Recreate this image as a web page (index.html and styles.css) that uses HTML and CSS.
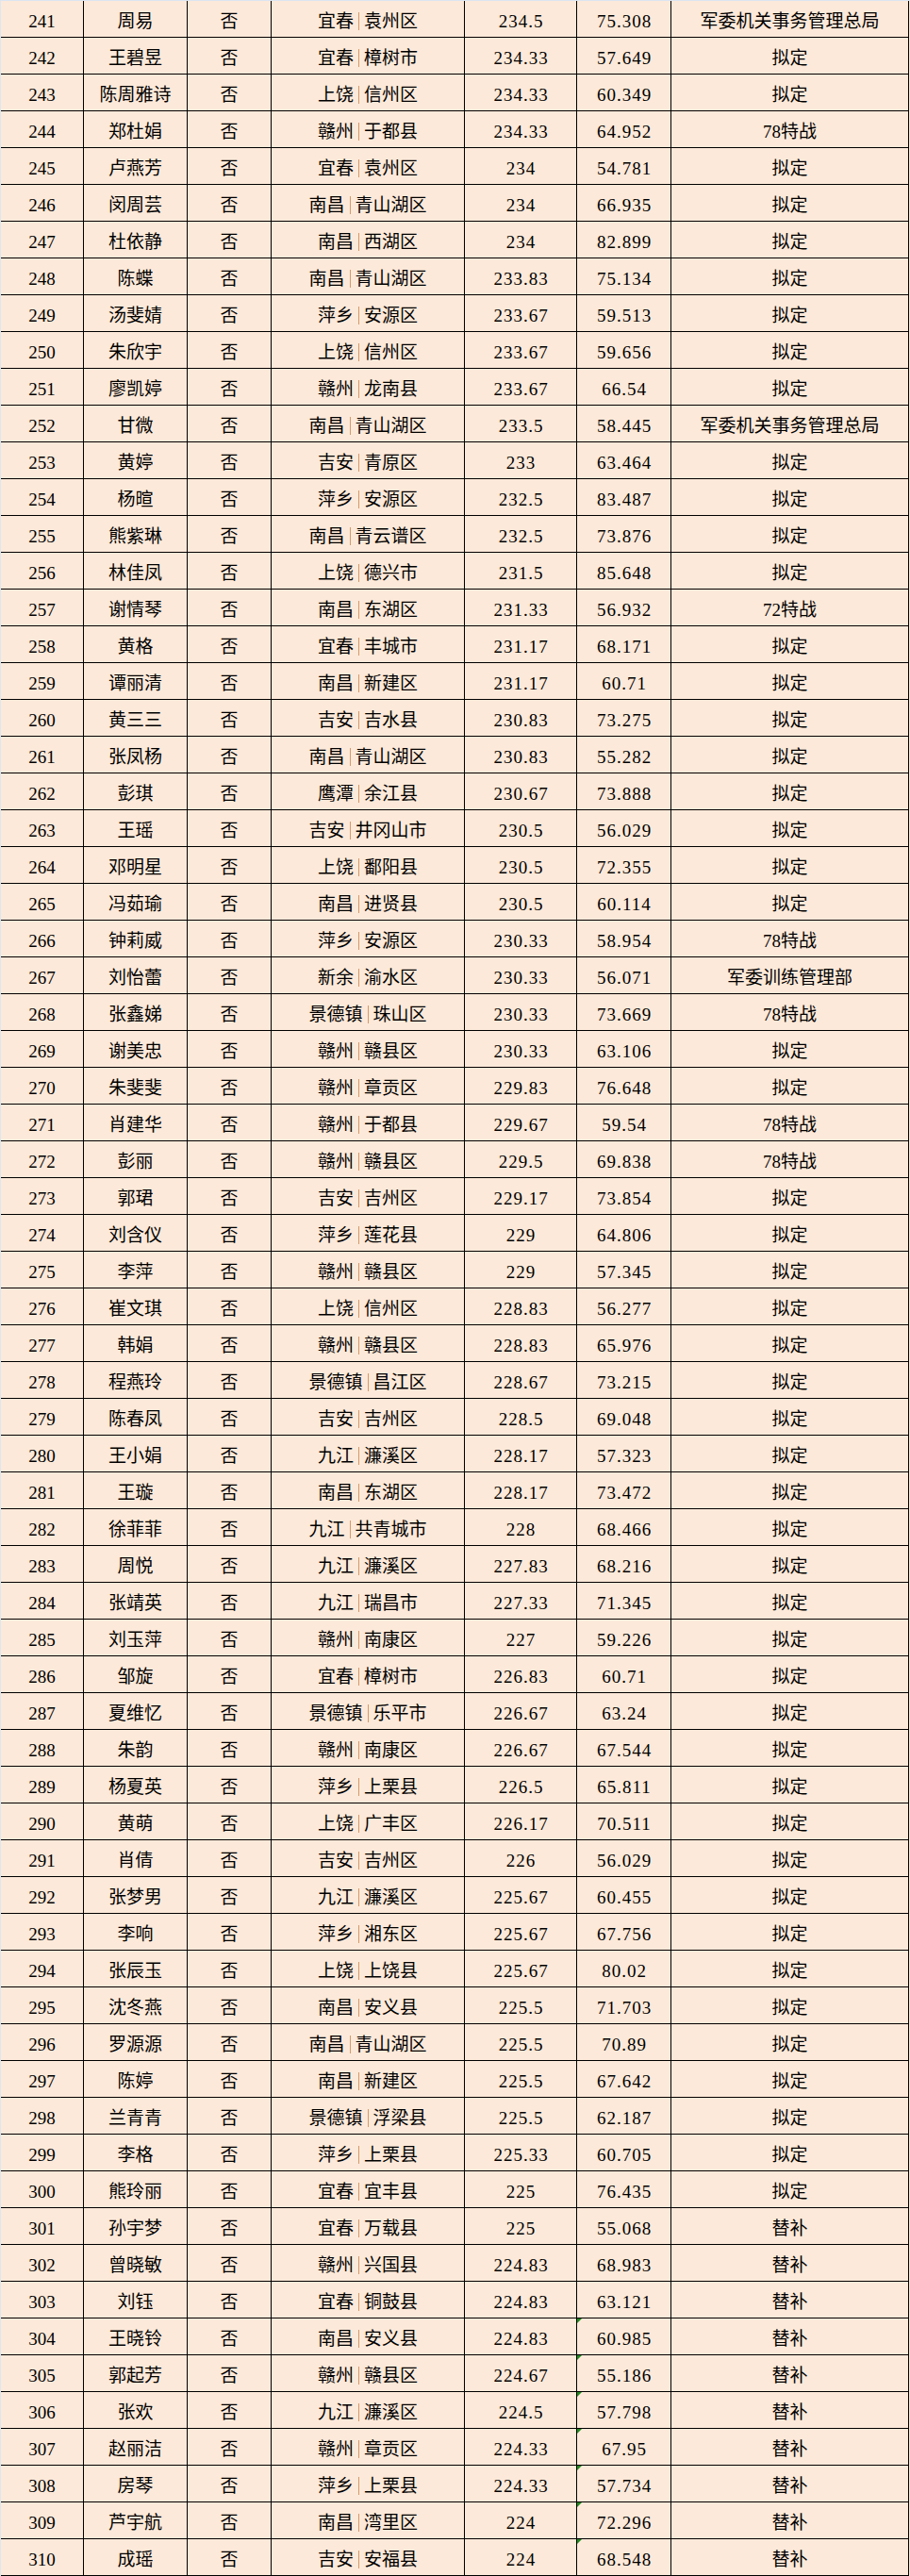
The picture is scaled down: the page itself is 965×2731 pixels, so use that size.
FILE: index.html
```html
<!DOCTYPE html>
<html lang="zh-CN">
<head>
<meta charset="utf-8">
<title>名单</title>
<link rel="stylesheet" href="styles.css">
</head>
<body>
<div class="sheet">
<div class="row"><div class="c">241</div><div class="c">周易</div><div class="c">否</div><div class="c">宜春<i class="sep"></i>袁州区</div><div class="c">234.5</div><div class="c">75.308</div><div class="c">军委机关事务管理总局</div></div>
<div class="row"><div class="c">242</div><div class="c">王碧昱</div><div class="c">否</div><div class="c">宜春<i class="sep"></i>樟树市</div><div class="c">234.33</div><div class="c">57.649</div><div class="c">拟定</div></div>
<div class="row"><div class="c">243</div><div class="c">陈周雅诗</div><div class="c">否</div><div class="c">上饶<i class="sep"></i>信州区</div><div class="c">234.33</div><div class="c">60.349</div><div class="c">拟定</div></div>
<div class="row"><div class="c">244</div><div class="c">郑杜娟</div><div class="c">否</div><div class="c">赣州<i class="sep"></i>于都县</div><div class="c">234.33</div><div class="c">64.952</div><div class="c">78特战</div></div>
<div class="row"><div class="c">245</div><div class="c">卢燕芳</div><div class="c">否</div><div class="c">宜春<i class="sep"></i>袁州区</div><div class="c">234</div><div class="c">54.781</div><div class="c">拟定</div></div>
<div class="row"><div class="c">246</div><div class="c">闵周芸</div><div class="c">否</div><div class="c">南昌<i class="sep"></i>青山湖区</div><div class="c">234</div><div class="c">66.935</div><div class="c">拟定</div></div>
<div class="row"><div class="c">247</div><div class="c">杜依静</div><div class="c">否</div><div class="c">南昌<i class="sep"></i>西湖区</div><div class="c">234</div><div class="c">82.899</div><div class="c">拟定</div></div>
<div class="row"><div class="c">248</div><div class="c">陈蝶</div><div class="c">否</div><div class="c">南昌<i class="sep"></i>青山湖区</div><div class="c">233.83</div><div class="c">75.134</div><div class="c">拟定</div></div>
<div class="row"><div class="c">249</div><div class="c">汤斐婧</div><div class="c">否</div><div class="c">萍乡<i class="sep"></i>安源区</div><div class="c">233.67</div><div class="c">59.513</div><div class="c">拟定</div></div>
<div class="row"><div class="c">250</div><div class="c">朱欣宇</div><div class="c">否</div><div class="c">上饶<i class="sep"></i>信州区</div><div class="c">233.67</div><div class="c">59.656</div><div class="c">拟定</div></div>
<div class="row"><div class="c">251</div><div class="c">廖凯婷</div><div class="c">否</div><div class="c">赣州<i class="sep"></i>龙南县</div><div class="c">233.67</div><div class="c">66.54</div><div class="c">拟定</div></div>
<div class="row"><div class="c">252</div><div class="c">甘微</div><div class="c">否</div><div class="c">南昌<i class="sep"></i>青山湖区</div><div class="c">233.5</div><div class="c">58.445</div><div class="c">军委机关事务管理总局</div></div>
<div class="row"><div class="c">253</div><div class="c">黄婷</div><div class="c">否</div><div class="c">吉安<i class="sep"></i>青原区</div><div class="c">233</div><div class="c">63.464</div><div class="c">拟定</div></div>
<div class="row"><div class="c">254</div><div class="c">杨暄</div><div class="c">否</div><div class="c">萍乡<i class="sep"></i>安源区</div><div class="c">232.5</div><div class="c">83.487</div><div class="c">拟定</div></div>
<div class="row"><div class="c">255</div><div class="c">熊紫琳</div><div class="c">否</div><div class="c">南昌<i class="sep"></i>青云谱区</div><div class="c">232.5</div><div class="c">73.876</div><div class="c">拟定</div></div>
<div class="row"><div class="c">256</div><div class="c">林佳凤</div><div class="c">否</div><div class="c">上饶<i class="sep"></i>德兴市</div><div class="c">231.5</div><div class="c">85.648</div><div class="c">拟定</div></div>
<div class="row"><div class="c">257</div><div class="c">谢情琴</div><div class="c">否</div><div class="c">南昌<i class="sep"></i>东湖区</div><div class="c">231.33</div><div class="c">56.932</div><div class="c">72特战</div></div>
<div class="row"><div class="c">258</div><div class="c">黄格</div><div class="c">否</div><div class="c">宜春<i class="sep"></i>丰城市</div><div class="c">231.17</div><div class="c">68.171</div><div class="c">拟定</div></div>
<div class="row"><div class="c">259</div><div class="c">谭丽清</div><div class="c">否</div><div class="c">南昌<i class="sep"></i>新建区</div><div class="c">231.17</div><div class="c">60.71</div><div class="c">拟定</div></div>
<div class="row"><div class="c">260</div><div class="c">黄三三</div><div class="c">否</div><div class="c">吉安<i class="sep"></i>吉水县</div><div class="c">230.83</div><div class="c">73.275</div><div class="c">拟定</div></div>
<div class="row"><div class="c">261</div><div class="c">张凤杨</div><div class="c">否</div><div class="c">南昌<i class="sep"></i>青山湖区</div><div class="c">230.83</div><div class="c">55.282</div><div class="c">拟定</div></div>
<div class="row"><div class="c">262</div><div class="c">彭琪</div><div class="c">否</div><div class="c">鹰潭<i class="sep"></i>余江县</div><div class="c">230.67</div><div class="c">73.888</div><div class="c">拟定</div></div>
<div class="row"><div class="c">263</div><div class="c">王瑶</div><div class="c">否</div><div class="c">吉安<i class="sep"></i>井冈山市</div><div class="c">230.5</div><div class="c">56.029</div><div class="c">拟定</div></div>
<div class="row"><div class="c">264</div><div class="c">邓明星</div><div class="c">否</div><div class="c">上饶<i class="sep"></i>鄱阳县</div><div class="c">230.5</div><div class="c">72.355</div><div class="c">拟定</div></div>
<div class="row"><div class="c">265</div><div class="c">冯茹瑜</div><div class="c">否</div><div class="c">南昌<i class="sep"></i>进贤县</div><div class="c">230.5</div><div class="c">60.114</div><div class="c">拟定</div></div>
<div class="row"><div class="c">266</div><div class="c">钟莉威</div><div class="c">否</div><div class="c">萍乡<i class="sep"></i>安源区</div><div class="c">230.33</div><div class="c">58.954</div><div class="c">78特战</div></div>
<div class="row"><div class="c">267</div><div class="c">刘怡蕾</div><div class="c">否</div><div class="c">新余<i class="sep"></i>渝水区</div><div class="c">230.33</div><div class="c">56.071</div><div class="c">军委训练管理部</div></div>
<div class="row"><div class="c">268</div><div class="c">张鑫娣</div><div class="c">否</div><div class="c">景德镇<i class="sep"></i>珠山区</div><div class="c">230.33</div><div class="c">73.669</div><div class="c">78特战</div></div>
<div class="row"><div class="c">269</div><div class="c">谢美忠</div><div class="c">否</div><div class="c">赣州<i class="sep"></i>赣县区</div><div class="c">230.33</div><div class="c">63.106</div><div class="c">拟定</div></div>
<div class="row"><div class="c">270</div><div class="c">朱斐斐</div><div class="c">否</div><div class="c">赣州<i class="sep"></i>章贡区</div><div class="c">229.83</div><div class="c">76.648</div><div class="c">拟定</div></div>
<div class="row"><div class="c">271</div><div class="c">肖建华</div><div class="c">否</div><div class="c">赣州<i class="sep"></i>于都县</div><div class="c">229.67</div><div class="c">59.54</div><div class="c">78特战</div></div>
<div class="row"><div class="c">272</div><div class="c">彭丽</div><div class="c">否</div><div class="c">赣州<i class="sep"></i>赣县区</div><div class="c">229.5</div><div class="c">69.838</div><div class="c">78特战</div></div>
<div class="row"><div class="c">273</div><div class="c">郭珺</div><div class="c">否</div><div class="c">吉安<i class="sep"></i>吉州区</div><div class="c">229.17</div><div class="c">73.854</div><div class="c">拟定</div></div>
<div class="row"><div class="c">274</div><div class="c">刘含仪</div><div class="c">否</div><div class="c">萍乡<i class="sep"></i>莲花县</div><div class="c">229</div><div class="c">64.806</div><div class="c">拟定</div></div>
<div class="row"><div class="c">275</div><div class="c">李萍</div><div class="c">否</div><div class="c">赣州<i class="sep"></i>赣县区</div><div class="c">229</div><div class="c">57.345</div><div class="c">拟定</div></div>
<div class="row"><div class="c">276</div><div class="c">崔文琪</div><div class="c">否</div><div class="c">上饶<i class="sep"></i>信州区</div><div class="c">228.83</div><div class="c">56.277</div><div class="c">拟定</div></div>
<div class="row"><div class="c">277</div><div class="c">韩娟</div><div class="c">否</div><div class="c">赣州<i class="sep"></i>赣县区</div><div class="c">228.83</div><div class="c">65.976</div><div class="c">拟定</div></div>
<div class="row"><div class="c">278</div><div class="c">程燕玲</div><div class="c">否</div><div class="c">景德镇<i class="sep"></i>昌江区</div><div class="c">228.67</div><div class="c">73.215</div><div class="c">拟定</div></div>
<div class="row"><div class="c">279</div><div class="c">陈春凤</div><div class="c">否</div><div class="c">吉安<i class="sep"></i>吉州区</div><div class="c">228.5</div><div class="c">69.048</div><div class="c">拟定</div></div>
<div class="row"><div class="c">280</div><div class="c">王小娟</div><div class="c">否</div><div class="c">九江<i class="sep"></i>濂溪区</div><div class="c">228.17</div><div class="c">57.323</div><div class="c">拟定</div></div>
<div class="row"><div class="c">281</div><div class="c">王璇</div><div class="c">否</div><div class="c">南昌<i class="sep"></i>东湖区</div><div class="c">228.17</div><div class="c">73.472</div><div class="c">拟定</div></div>
<div class="row"><div class="c">282</div><div class="c">徐菲菲</div><div class="c">否</div><div class="c">九江<i class="sep"></i>共青城市</div><div class="c">228</div><div class="c">68.466</div><div class="c">拟定</div></div>
<div class="row"><div class="c">283</div><div class="c">周悦</div><div class="c">否</div><div class="c">九江<i class="sep"></i>濂溪区</div><div class="c">227.83</div><div class="c">68.216</div><div class="c">拟定</div></div>
<div class="row"><div class="c">284</div><div class="c">张靖英</div><div class="c">否</div><div class="c">九江<i class="sep"></i>瑞昌市</div><div class="c">227.33</div><div class="c">71.345</div><div class="c">拟定</div></div>
<div class="row"><div class="c">285</div><div class="c">刘玉萍</div><div class="c">否</div><div class="c">赣州<i class="sep"></i>南康区</div><div class="c">227</div><div class="c">59.226</div><div class="c">拟定</div></div>
<div class="row"><div class="c">286</div><div class="c">邹旋</div><div class="c">否</div><div class="c">宜春<i class="sep"></i>樟树市</div><div class="c">226.83</div><div class="c">60.71</div><div class="c">拟定</div></div>
<div class="row"><div class="c">287</div><div class="c">夏维忆</div><div class="c">否</div><div class="c">景德镇<i class="sep"></i>乐平市</div><div class="c">226.67</div><div class="c">63.24</div><div class="c">拟定</div></div>
<div class="row"><div class="c">288</div><div class="c">朱韵</div><div class="c">否</div><div class="c">赣州<i class="sep"></i>南康区</div><div class="c">226.67</div><div class="c">67.544</div><div class="c">拟定</div></div>
<div class="row"><div class="c">289</div><div class="c">杨夏英</div><div class="c">否</div><div class="c">萍乡<i class="sep"></i>上栗县</div><div class="c">226.5</div><div class="c">65.811</div><div class="c">拟定</div></div>
<div class="row"><div class="c">290</div><div class="c">黄萌</div><div class="c">否</div><div class="c">上饶<i class="sep"></i>广丰区</div><div class="c">226.17</div><div class="c">70.511</div><div class="c">拟定</div></div>
<div class="row"><div class="c">291</div><div class="c">肖倩</div><div class="c">否</div><div class="c">吉安<i class="sep"></i>吉州区</div><div class="c">226</div><div class="c">56.029</div><div class="c">拟定</div></div>
<div class="row"><div class="c">292</div><div class="c">张梦男</div><div class="c">否</div><div class="c">九江<i class="sep"></i>濂溪区</div><div class="c">225.67</div><div class="c">60.455</div><div class="c">拟定</div></div>
<div class="row"><div class="c">293</div><div class="c">李响</div><div class="c">否</div><div class="c">萍乡<i class="sep"></i>湘东区</div><div class="c">225.67</div><div class="c">67.756</div><div class="c">拟定</div></div>
<div class="row"><div class="c">294</div><div class="c">张辰玉</div><div class="c">否</div><div class="c">上饶<i class="sep"></i>上饶县</div><div class="c">225.67</div><div class="c">80.02</div><div class="c">拟定</div></div>
<div class="row"><div class="c">295</div><div class="c">沈冬燕</div><div class="c">否</div><div class="c">南昌<i class="sep"></i>安义县</div><div class="c">225.5</div><div class="c">71.703</div><div class="c">拟定</div></div>
<div class="row"><div class="c">296</div><div class="c">罗源源</div><div class="c">否</div><div class="c">南昌<i class="sep"></i>青山湖区</div><div class="c">225.5</div><div class="c">70.89</div><div class="c">拟定</div></div>
<div class="row"><div class="c">297</div><div class="c">陈婷</div><div class="c">否</div><div class="c">南昌<i class="sep"></i>新建区</div><div class="c">225.5</div><div class="c">67.642</div><div class="c">拟定</div></div>
<div class="row"><div class="c">298</div><div class="c">兰青青</div><div class="c">否</div><div class="c">景德镇<i class="sep"></i>浮梁县</div><div class="c">225.5</div><div class="c">62.187</div><div class="c">拟定</div></div>
<div class="row"><div class="c">299</div><div class="c">李格</div><div class="c">否</div><div class="c">萍乡<i class="sep"></i>上栗县</div><div class="c">225.33</div><div class="c">60.705</div><div class="c">拟定</div></div>
<div class="row"><div class="c">300</div><div class="c">熊玲丽</div><div class="c">否</div><div class="c">宜春<i class="sep"></i>宜丰县</div><div class="c">225</div><div class="c">76.435</div><div class="c">拟定</div></div>
<div class="row"><div class="c">301</div><div class="c">孙宇梦</div><div class="c">否</div><div class="c">宜春<i class="sep"></i>万载县</div><div class="c">225</div><div class="c">55.068</div><div class="c">替补</div></div>
<div class="row"><div class="c">302</div><div class="c">曾晓敏</div><div class="c">否</div><div class="c">赣州<i class="sep"></i>兴国县</div><div class="c">224.83</div><div class="c">68.983</div><div class="c">替补</div></div>
<div class="row"><div class="c">303</div><div class="c">刘钰</div><div class="c">否</div><div class="c">宜春<i class="sep"></i>铜鼓县</div><div class="c">224.83</div><div class="c">63.121</div><div class="c">替补</div></div>
<div class="row"><div class="c">304</div><div class="c">王晓铃</div><div class="c">否</div><div class="c">南昌<i class="sep"></i>安义县</div><div class="c">224.83</div><div class="c flag">60.985</div><div class="c">替补</div></div>
<div class="row"><div class="c">305</div><div class="c">郭起芳</div><div class="c">否</div><div class="c">赣州<i class="sep"></i>赣县区</div><div class="c">224.67</div><div class="c flag">55.186</div><div class="c">替补</div></div>
<div class="row"><div class="c">306</div><div class="c">张欢</div><div class="c">否</div><div class="c">九江<i class="sep"></i>濂溪区</div><div class="c">224.5</div><div class="c flag">57.798</div><div class="c">替补</div></div>
<div class="row"><div class="c">307</div><div class="c">赵丽洁</div><div class="c">否</div><div class="c">赣州<i class="sep"></i>章贡区</div><div class="c">224.33</div><div class="c flag">67.95</div><div class="c">替补</div></div>
<div class="row"><div class="c">308</div><div class="c">房琴</div><div class="c">否</div><div class="c">萍乡<i class="sep"></i>上栗县</div><div class="c">224.33</div><div class="c flag">57.734</div><div class="c">替补</div></div>
<div class="row"><div class="c">309</div><div class="c">芦宇航</div><div class="c">否</div><div class="c">南昌<i class="sep"></i>湾里区</div><div class="c">224</div><div class="c flag">72.296</div><div class="c">替补</div></div>
<div class="row"><div class="c">310</div><div class="c">成瑶</div><div class="c">否</div><div class="c">吉安<i class="sep"></i>安福县</div><div class="c">224</div><div class="c flag">68.548</div><div class="c">替补</div></div>
</div>
</body>
</html>
```

FILE: styles.css
```css
html, body {
  margin: 0;
  padding: 0;
  background: #dce6f1;
}

body {
  padding: 1px 0 0 1px;
}

.sheet {
  width: 964px;
  background: #fde9d9;
  font-family: "Liberation Serif", "Noto Sans CJK SC", serif;
  font-size: 19px;
  color: #000;
}

.row {
  display: grid;
  grid-template-columns: 88px 110px 89px 205px 119px 100px 252px;
}

.c {
  position: relative;
  box-sizing: border-box;
  height: 39px;
  border-right: 1px solid #000;
  border-bottom: 1px solid #000;
  display: flex;
  align-items: center;
  justify-content: center;
  padding-top: 4px;
  line-height: 1;
  white-space: nowrap;
}

/* score columns: wider, monospaced-looking figures */
.c:nth-child(5),
.c:nth-child(6) {
  letter-spacing: 1px;
  padding-left: 1px;
}

.sep {
  display: inline-block;
  width: 1px;
  height: 19px;
  margin: 0 5px;
  background: #d49a6a;
}

.flag::before {
  content: "";
  position: absolute;
  left: 0;
  top: 0;
  width: 0;
  height: 0;
  border-top: 5px solid #1f8a1f;
  border-right: 5px solid transparent;
}
```
